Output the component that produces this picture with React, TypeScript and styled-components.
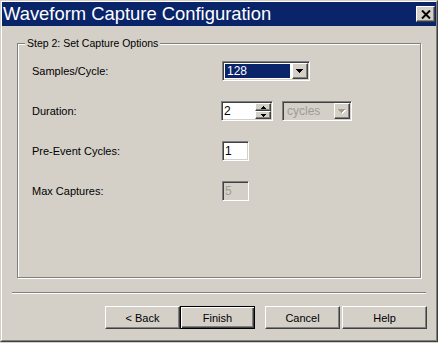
import React from 'react'
import styled, { createGlobalStyle, css } from 'styled-components'

const GlobalStyle = createGlobalStyle`
  html, body {
    margin: 0;
    padding: 0;
    background: #d4d0c8;
  }
  body {
    font-family: 'Liberation Sans', Arial, sans-serif;
    font-size: 11px;
    color: #000;
  }
  * {
    box-sizing: border-box;
  }
`

const raised = css`
  border: 1px solid;
  border-color: #fff #404040 #404040 #fff;
  box-shadow: inset -1px -1px #808080;
  background: #d4d0c8;
`

const sunken = css`
  border: 1px solid;
  border-color: #808080 #fff #fff #808080;
  box-shadow: inset 1px 1px #404040, inset -1px -1px #d4d0c8;
  padding: 1px;
`

const Window = styled.div`
  width: 438px;
  height: 342px;
  border: 1px solid;
  border-color: #d4d0c8 #404040 #404040 #d4d0c8;
  background: #d4d0c8;
`

const Frame = styled.div`
  height: 100%;
  border: 1px solid;
  border-color: #fff #808080 #808080 #fff;
  display: flex;
  flex-direction: column;
`

const TitleBar = styled.div`
  height: 24px;
  flex: none;
  background: #0a246a;
  display: flex;
  align-items: center;
  padding: 0 1px 0 1px;
`

const Title = styled.span`
  flex: 1;
  color: #fff;
  font-size: 18.4px;
  line-height: 24px;
  white-space: nowrap;
`

const CloseButton = styled.div`
  ${raised}
  width: 19px;
  height: 16px;
  display: flex;
  align-items: center;
  justify-content: center;
`

const Group = styled.div`
  position: relative;
  margin: 17px 0 0 15px;
  width: 404px;
  height: 235px;
  border: 1px solid #808080;
  box-shadow: 1px 1px #fff, inset 1px 1px #fff;
  padding: 17px 0 0 14px;
`

// caption sits on top of the etched border
const GroupLabel = styled.span`
  position: absolute;
  top: -7px;
  left: 7px;
  padding: 0 2px;
  background: #d4d0c8;
  font-size: 10.5px;
  line-height: 13px;
`

const Form = styled.div`
  display: grid;
  grid-template-columns: 190px auto;
  grid-auto-rows: 20px;
  row-gap: 20px;
  align-items: center;
`

const Label = styled.div`
  font-size: 11px;
  line-height: 13px;
`

const Inline = styled.div`
  display: flex;
  align-items: center;
  gap: 9px;
  margin-left: -1px;
`

const Combo = styled.div<{ $w: number; $disabled?: boolean }>`
  ${sunken}
  width: ${p => p.$w}px;
  height: 20px;
  display: flex;
  background: ${p => (p.$disabled ? '#d4d0c8' : '#fff')};
`

const ComboText = styled.div<{ $selected?: boolean; $disabled?: boolean }>`
  flex: 1;
  margin: 1px 2px 1px 1px;
  padding-left: 2px;
  font-size: 12px;
  line-height: 14px;
  background: ${p => (p.$selected ? '#0a246a' : 'transparent')};
  color: ${p => (p.$selected ? '#fff' : p.$disabled ? '#a09c94' : '#000')};
`

const DropButton = styled.div`
  ${raised}
  width: 16px;
  flex: none;
  display: flex;
  align-items: center;
  justify-content: center;
`

const Edit = styled.div<{ $w: number; $disabled?: boolean }>`
  ${sunken}
  width: ${p => p.$w}px;
  height: 20px;
  display: flex;
  background: ${p => (p.$disabled ? '#d4d0c8' : '#fff')};
`

const EditText = styled.div<{ $disabled?: boolean }>`
  flex: 1;
  padding-left: 1px;
  font-size: 12px;
  line-height: 16px;
  color: ${p => (p.$disabled ? '#a09c94' : '#000')};
`

const Spinner = styled.div`
  width: 16px;
  flex: none;
  display: flex;
  flex-direction: column;
`

const SpinButton = styled.div`
  ${raised}
  flex: 1;
  display: flex;
  align-items: center;
  justify-content: center;
`

const Separator = styled.div`
  margin: 14px 0 0 10px;
  width: 414px;
  height: 2px;
  border-top: 1px solid #808080;
  border-bottom: 1px solid #fff;
`

const ButtonRow = styled.div`
  display: flex;
  margin: 12px 0 0 103px;
`

const Button = styled.button<{ $w: number; $ml?: number; $default?: boolean }>`
  width: ${p => p.$w}px;
  height: 23px;
  margin: 0 0 0 ${p => p.$ml ?? 0}px;
  padding: 0;
  font: inherit;
  font-size: 11px;
  color: #000;
  background: #d4d0c8;
  border: 1px solid;
  ${p =>
    p.$default
      ? css`
          border-color: #000;
          box-shadow: inset 1px 1px #fff, inset -1px -1px #404040, inset -2px -2px #808080;
        `
      : css`
          border-color: #fff #404040 #404040 #fff;
          box-shadow: inset -1px -1px #808080;
        `}
`

function DownArrow({ disabled }: { disabled?: boolean }) {
  const d = 'M0 0h7v1h-1v1h-1v1h-1v1h-1v-1h-1v-1h-1v-1h-1z'
  return (
    <svg width="8" height="5" viewBox="0 0 8 5" shapeRendering="crispEdges">
      {disabled && <path d={d} fill="#fff" transform="translate(1 1)" />}
      <path d={d} fill={disabled ? '#a09c94' : '#000'} />
    </svg>
  )
}

function SmallArrow({ up }: { up?: boolean }) {
  return (
    <svg width="5" height="3" viewBox="0 0 5 3" shapeRendering="crispEdges">
      <path
        d="M2 0h1v1h1v1h1v1h-5v-1h1v-1h1z"
        fill="#000"
        transform={up ? undefined : 'rotate(180 2.5 1.5)'}
      />
    </svg>
  )
}

function CloseGlyph() {
  return (
    <svg width="10" height="9" viewBox="0 0 10 9">
      <path d="M1 0.5 L9 8.5 M9 0.5 L1 8.5" stroke="#000" strokeWidth="2" />
    </svg>
  )
}

export default function App() {
  return (
    <>
      <GlobalStyle />
      <Window>
        <Frame>
          <TitleBar>
            <Title>Waveform Capture Configuration</Title>
            <CloseButton>
              <CloseGlyph />
            </CloseButton>
          </TitleBar>

          <Group>
            <GroupLabel>Step 2: Set Capture Options</GroupLabel>
            <Form>
              <Label>Samples/Cycle:</Label>
              <Combo $w={88}>
                <ComboText $selected>128</ComboText>
                <DropButton>
                  <DownArrow />
                </DropButton>
              </Combo>

              <Label>Duration:</Label>
              <Inline>
                <Edit $w={52}>
                  <EditText>2</EditText>
                  <Spinner>
                    <SpinButton>
                      <SmallArrow up />
                    </SpinButton>
                    <SpinButton>
                      <SmallArrow />
                    </SpinButton>
                  </Spinner>
                </Edit>
                <Combo $w={70} $disabled>
                  <ComboText $disabled>cycles</ComboText>
                  <DropButton>
                    <DownArrow disabled />
                  </DropButton>
                </Combo>
              </Inline>

              <Label>Pre-Event Cycles:</Label>
              <Edit $w={27}>
                <EditText>1</EditText>
              </Edit>

              <Label>Max Captures:</Label>
              <Edit $w={27} $disabled>
                <EditText $disabled>5</EditText>
              </Edit>
            </Form>
          </Group>

          <Separator />

          <ButtonRow>
            <Button $w={75}>&lt; Back</Button>
            <Button $w={75} $default>
              Finish
            </Button>
            <Button $w={75} $ml={10}>
              Cancel
            </Button>
            <Button $w={85} $ml={2}>
              Help
            </Button>
          </ButtonRow>
        </Frame>
      </Window>
    </>
  )
}
